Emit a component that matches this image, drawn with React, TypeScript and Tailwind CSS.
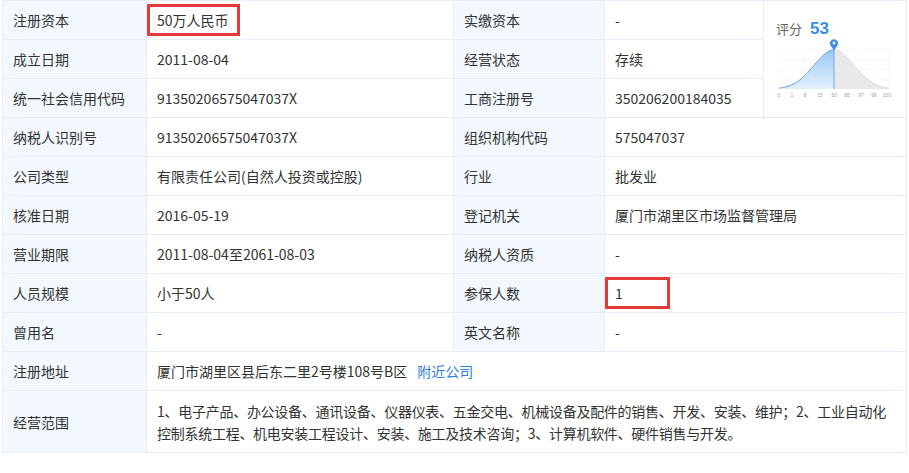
import React from 'react';

type Cell = { label: string; value: React.ReactNode; mark?: boolean };

const rows: [Cell, Cell][] = [
    [{ label: '注册资本', value: '50万人民币', mark: true }, { label: '实缴资本', value: '-' }],
    [{ label: '成立日期', value: '2011-08-04' }, { label: '经营状态', value: '存续' }],
    [{ label: '统一社会信用代码', value: '91350206575047037X' }, { label: '工商注册号', value: '350206200184035' }],
    [{ label: '纳税人识别号', value: '91350206575047037X' }, { label: '组织机构代码', value: '575047037' }],
    [{ label: '公司类型', value: '有限责任公司(自然人投资或控股)' }, { label: '行业', value: '批发业' }],
    [{ label: '核准日期', value: '2016-05-19' }, { label: '登记机关', value: '厦门市湖里区市场监督管理局' }],
    [{ label: '营业期限', value: '2011-08-04至2061-08-03' }, { label: '纳税人资质', value: '-' }],
    [{ label: '人员规模', value: '小于50人' }, { label: '参保人数', value: '1', mark: true }],
    [{ label: '曾用名', value: '-' }, { label: '英文名称', value: '-' }],
];

const labelCls = 'bg-[#f2f8fe] border border-[#e6edf4] pl-[10px] text-[#333] align-middle';
const valueCls = 'bg-white border border-[#e6edf4] pl-[10px] text-[#333] align-middle';

const ScoreChart = () => {
    // bell curve, peak at x=55
    const pts: string[] = [];
    for (let i = 0; i <= 110; i++) {
        const y = 41 - 39 * Math.exp(-Math.pow((i - 55) / 20, 2) / 2);
        pts.push(`${i},${y.toFixed(2)}`);
    }
    const left = pts.slice(0, 56).join(' ');
    const right = pts.slice(55).join(' ');
    const ticks = ['0', '1', '8', '15', '50', '85', '97', '99', '100'];
    const tx = [0, 13, 26, 41, 55, 68, 82, 95, 108];
    return (
        <svg width="116" height="62" viewBox="-3 -12 116 62" className="block">
            <defs>
                <linearGradient id="blueFill" x1="0" y1="0" x2="0" y2="1">
                    <stop offset="0%" stopColor="#9cc8f3" />
                    <stop offset="100%" stopColor="#e3f0fc" />
                </linearGradient>
            </defs>
            {[2, 12, 22, 32].map(y => (
                <line key={y} x1="0" x2="110" y1={y} y2={y} stroke="#f0f0f0" strokeWidth="0.6" />
            ))}
            {[0, 13, 26, 41, 55, 68, 82, 95, 110].map(x => (
                <line key={x} x1={x} x2={x} y1="2" y2="41" stroke="#f3f3f3" strokeWidth="0.6" />
            ))}
            <polygon points={`55,41 ${right} 110,41`} fill="#e9e9e9" />
            <polygon points={`0,41 ${left} 55,41`} fill="url(#blueFill)" />
            <polyline points={left} fill="none" stroke="#5a9de6" strokeWidth="0.9" />
            <polyline points={right} fill="none" stroke="#d8d8d8" strokeWidth="0.9" />
            <line x1="55" x2="55" y1="2" y2="41" stroke="#6aa6ea" strokeWidth="1" />
            <path d="M55 2.5 L51.6 -2.5 A4 4 0 1 1 58.4 -2.5 Z" fill="#3d8de6" />
            <circle cx="55" cy="-5" r="1.4" fill="#fff" />
            {ticks.map((t, i) => (
                <text key={t} x={tx[i]} y="48.5" fontSize="5" fill="#9aa3ad" textAnchor="middle" fontFamily="'Liberation Sans', sans-serif">{t}</text>
            ))}
        </svg>
    );
};

const Mark = ({ children, w }: { children: React.ReactNode; w: number }) => (
    <div className="relative h-[38px] flex items-center">
        <span>{children}</span>
        <div
            className="absolute -left-[10px] top-[3px] h-[32px] border-[3px] border-[#e53a3a] pointer-events-none"
            style={{ width: w }}
        />
    </div>
);

export default function App() {
    return (
        <div className="w-[909px] h-[473px] bg-white pt-0 pl-[2px]" style={{ fontFamily: "'Noto Sans CJK SC', 'Microsoft YaHei', sans-serif" }}>
            <table className="border-collapse table-fixed w-[904px] text-[14px] leading-[22px]">
                <colgroup>
                    <col className="w-[144px]" />
                    <col className="w-[307px]" />
                    <col className="w-[151px]" />
                    <col className="w-[159px]" />
                    <col className="w-[143px]" />
                </colgroup>
                <tbody>
                    {rows.map(([a, b], idx) => (
                        <tr key={a.label} className="h-[39px]">
                            <td className={labelCls}>{a.label}</td>
                            <td className={valueCls}>
                                {a.mark ? <Mark w={93}>{a.value}</Mark> : a.value}
                            </td>
                            <td className={labelCls}>{b.label}</td>
                            <td className={valueCls} colSpan={idx >= 3 ? 2 : 1}>
                                {b.mark ? <Mark w={65}>{b.value}</Mark> : b.value}
                            </td>
                            {idx === 0 && (
                                <td rowSpan={3} className="bg-white border border-[#e6edf4] align-top p-0">
                                    <div className="pl-[12px] pt-[19px]">
                                        <div className="flex items-baseline gap-[8px] leading-none">
                                            <span className="text-[13px] text-[#666]">评分</span>
                                            <span className="text-[17px] font-bold text-[#3a8ee6]" style={{ fontFamily: "'Liberation Sans', sans-serif" }}>53</span>
                                        </div>
                                        <div className="-mt-[1px]">
                                            <ScoreChart />
                                        </div>
                                    </div>
                                </td>
                            )}
                        </tr>
                    ))}
                    <tr className="h-[39px]">
                        <td className={labelCls}>注册地址</td>
                        <td className={valueCls} colSpan={4}>
                            厦门市湖里区县后东二里2号楼108号B区
                            <a className="ml-[10px] text-[#2f7fe0] cursor-pointer">附近公司</a>
                        </td>
                    </tr>
                    <tr className="h-[62px]">
                        <td className={labelCls}>经营范围</td>
                        <td className={`${valueCls} pr-[12px] py-[8px] tracking-[-0.27px]`} colSpan={4}>
                            1、电子产品、办公设备、通讯设备、仪器仪表、五金交电、机械设备及配件的销售、开发、安装、维护；2、工业自动化控制系统工程、机电安装工程设计、安装、施工及技术咨询；3、计算机软件、硬件销售与开发。
                        </td>
                    </tr>
                </tbody>
            </table>
        </div>
    );
}
